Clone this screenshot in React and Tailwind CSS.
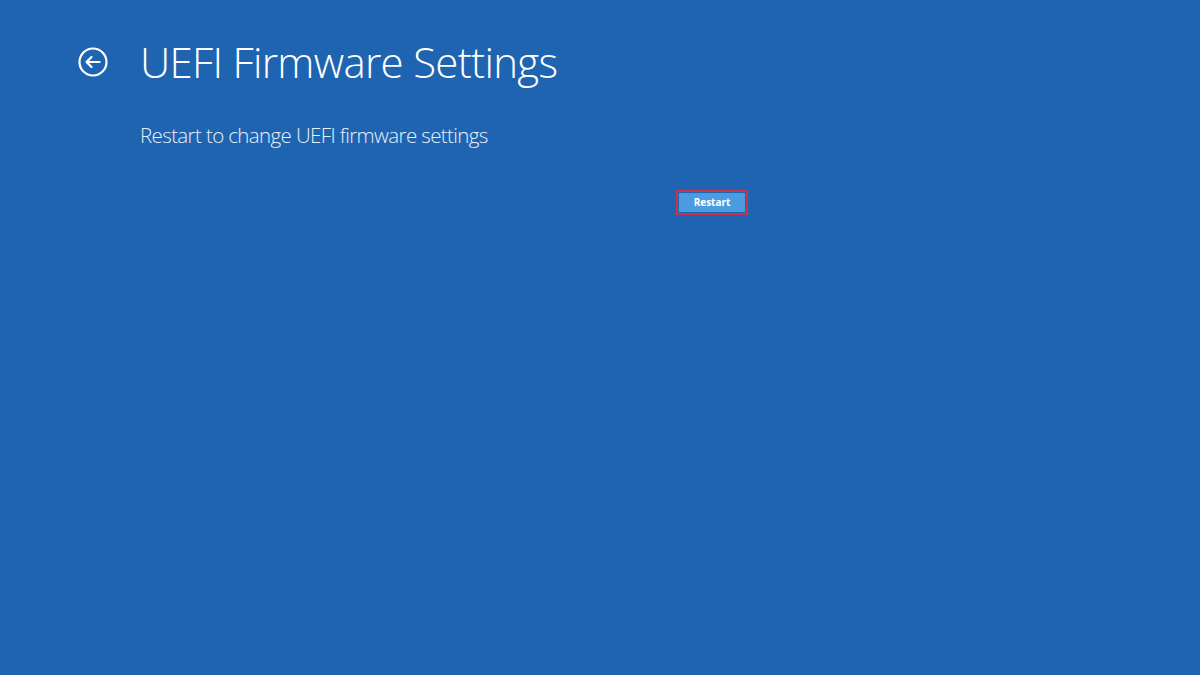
export default function App() {
  return (
    <div
      className="w-[1200px] h-[675px] bg-[#1f64b1] text-white overflow-hidden"
      style={{ fontFamily: '"Open Sans", "Noto Sans", sans-serif' }}
    >
      <div className="flex items-center pt-[41px] pl-[77px]">
        <svg width="32" height="32" viewBox="0 0 32 32" fill="none" stroke="white" strokeWidth="2.2">
          <circle cx="16" cy="16" r="13.5" />
          <path d="M9.5 16h13M14.5 11l-5 5 5 5" strokeLinecap="round" strokeLinejoin="round" />
        </svg>
        <h1 className="ml-[31px] text-[42px] font-light leading-none tracking-[-0.7px]">
          UEFI Firmware Settings
        </h1>
      </div>
      <div className="pl-[140px] mt-[42px] text-[20.5px] leading-none font-light tracking-[-0.62px] text-[#e8f0fa]">
        Restart to change UEFI firmware settings
      </div>
      <div className="flex pl-[676px] mt-[44px]">
        <button className="border-[2px] border-[#c8324a] p-[1px]">
          <div className="w-[66px] h-[19px] bg-[#4a9be0] flex items-center justify-center text-[10px] font-bold text-white">
            Restart
          </div>
        </button>
      </div>
    </div>
  );
}
